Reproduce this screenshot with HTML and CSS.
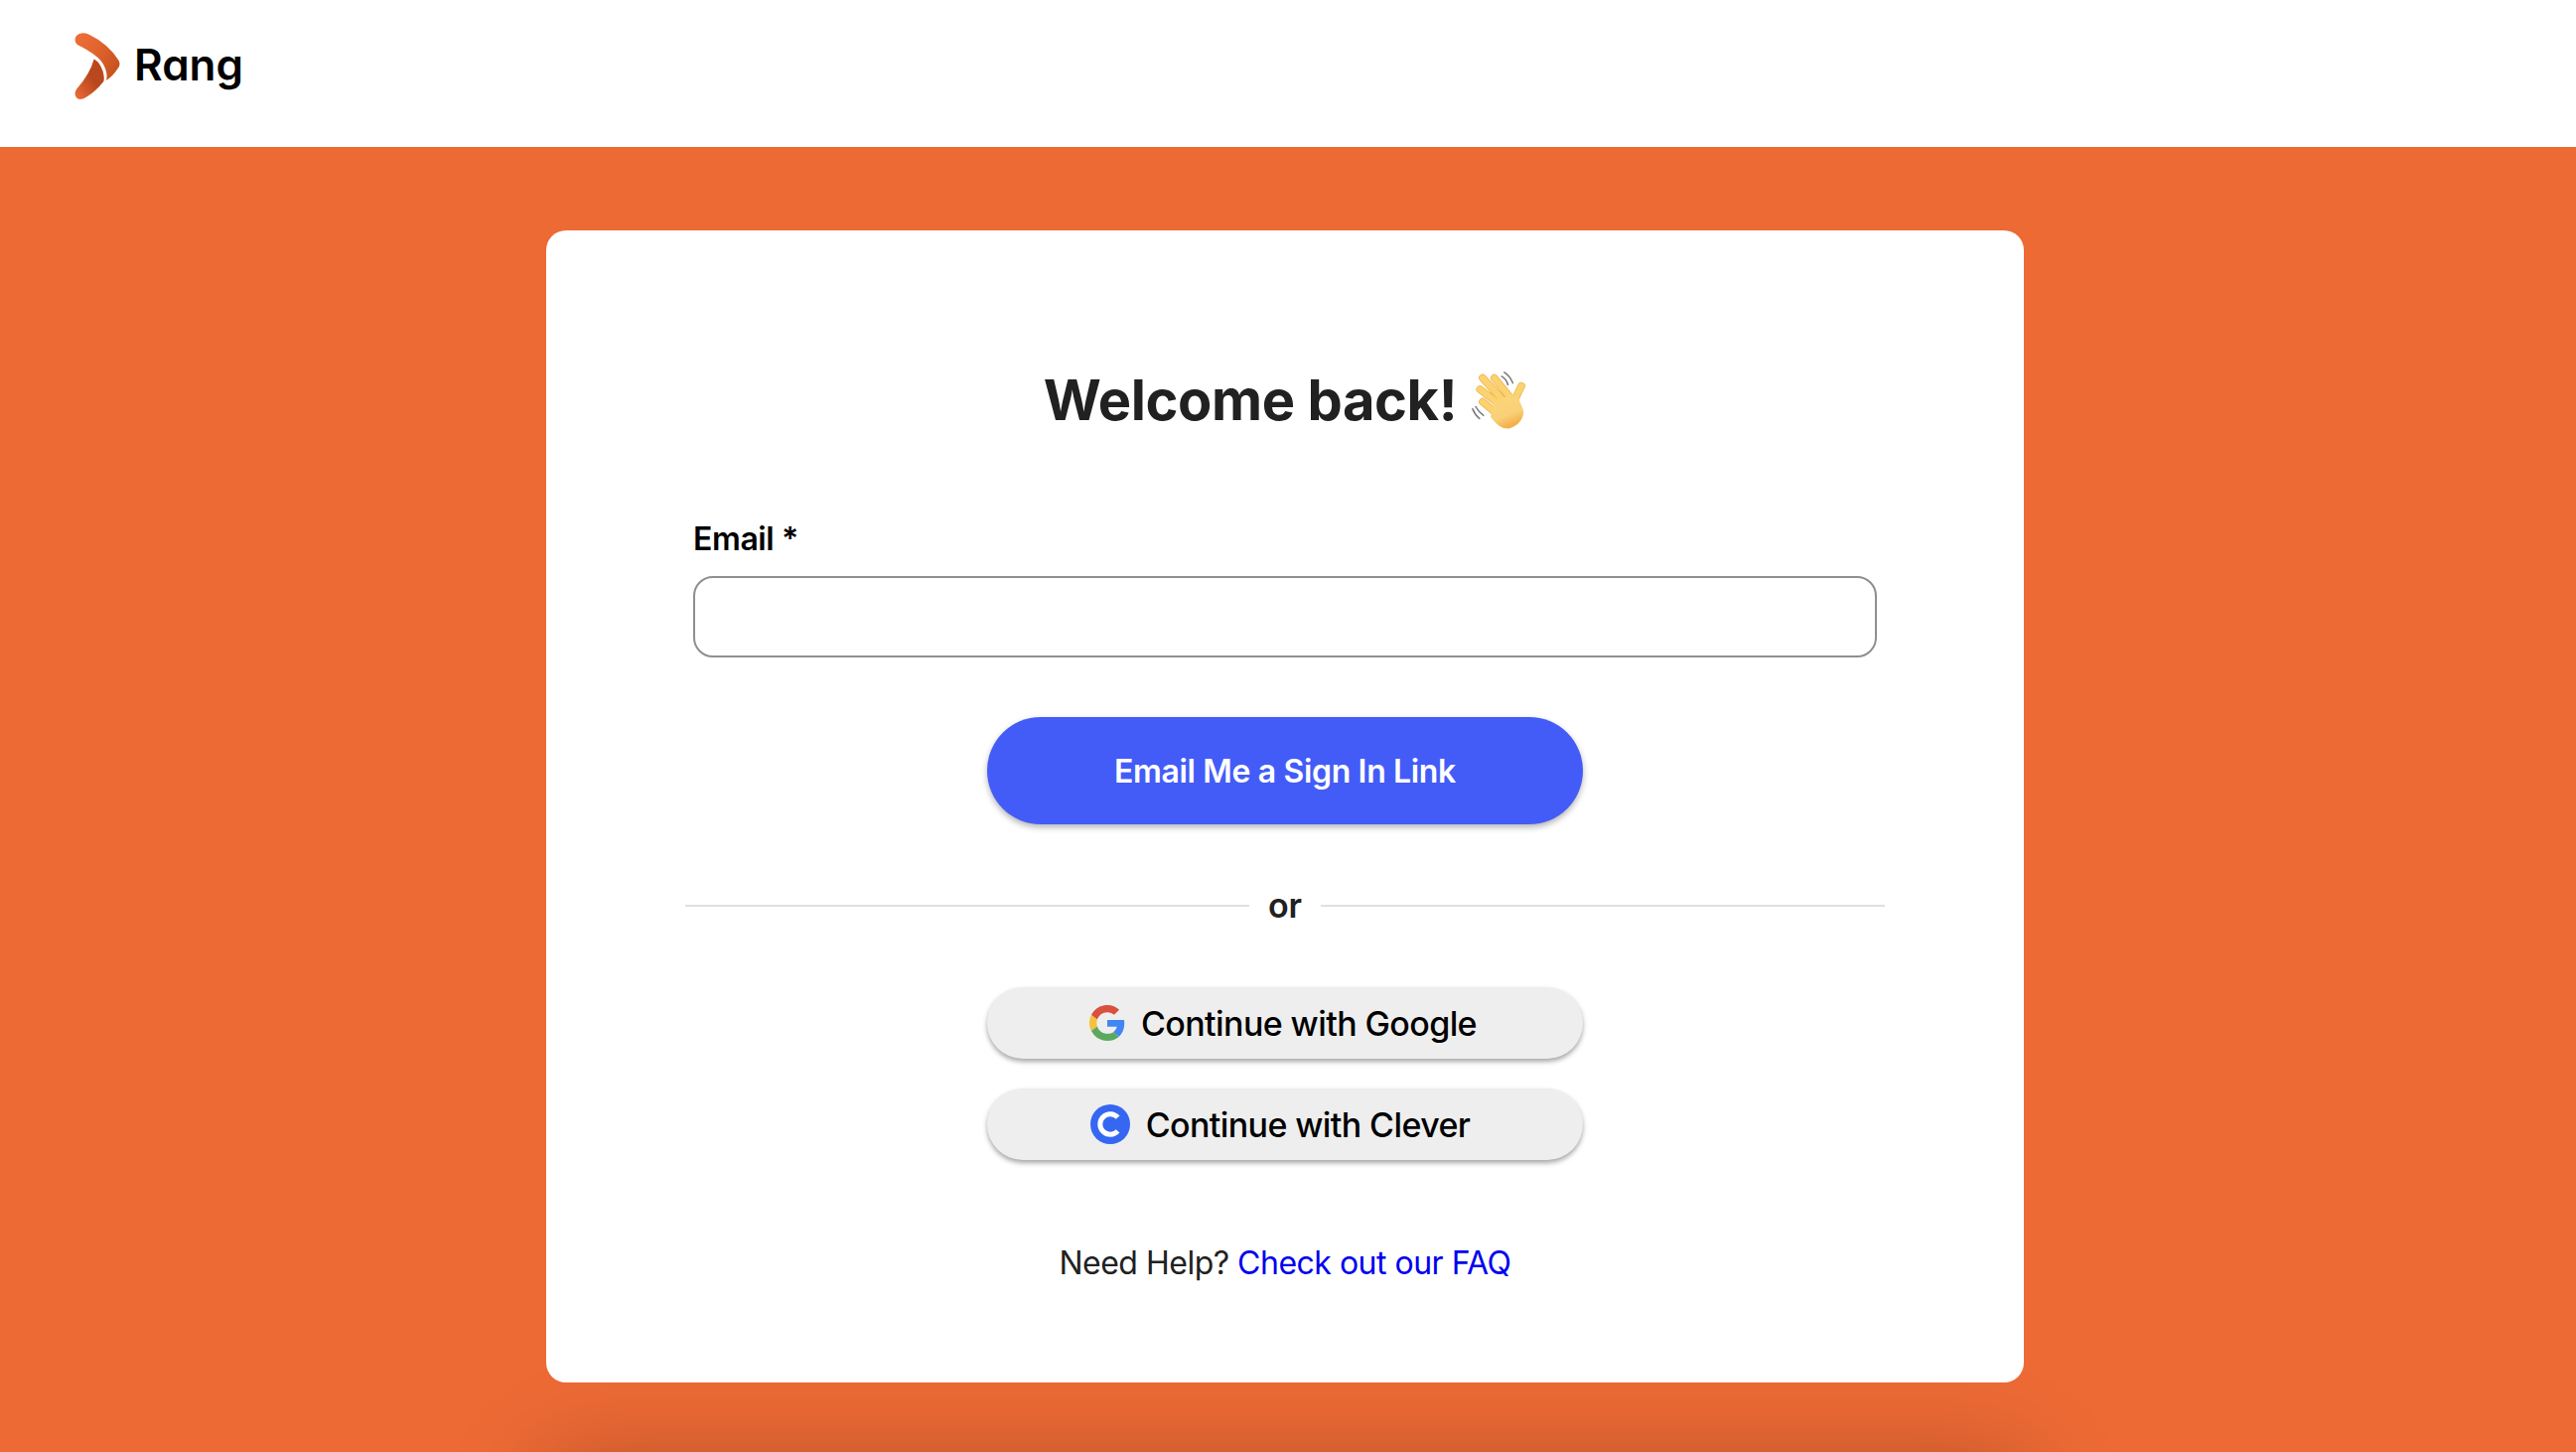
FILE: index.html
```html
<!DOCTYPE html>
<html lang="en">
<head>
<meta charset="utf-8">
<title>Rang</title>
<link rel="stylesheet" href="styles.css">
</head>
<body>
<header class="topbar">
  <svg class="logo" viewBox="100 60 150 215" aria-hidden="true">
    <defs>
      <linearGradient id="armTop" x1="0" y1="0" x2="1" y2="0.6"><stop offset="0" stop-color="#EE6F3A"/><stop offset="0.5" stop-color="#E2642F"/><stop offset="1" stop-color="#C9531F"/></linearGradient>
      <linearGradient id="armLow" x1="0" y1="1" x2="1" y2="0"><stop offset="0" stop-color="#EE6F3A"/><stop offset="0.55" stop-color="#B9481C"/><stop offset="1" stop-color="#B9481C"/></linearGradient>
    </defs>
    <path fill="url(#armTop)" d="M109 74Q122 60 148 70Q206 98 238 148Q248 162 236 176Q222 198 201 212Q207 190 192 162Q176 134 112 102Q99 88 109 74Z"/>
    <path fill="url(#armLow)" d="M163 146Q176 152 184 168Q198 192 193 215Q168 246 142 262Q126 274 112 268Q98 256 110 238Q152 190 163 146Z"/>
  </svg>
  <span class="brand">Rang</span>
</header>
<main class="stage">
  <section class="card">
    <h1 class="title">Welcome back!
      <svg class="wave" viewBox="35 25 165 180" aria-hidden="true">
        <defs>
          <linearGradient id="palm" x1="0" y1="0" x2="0.4" y2="1"><stop offset="0" stop-color="#FBD677"/><stop offset="0.7" stop-color="#FAD078"/><stop offset="1" stop-color="#F2B04A"/></linearGradient>
        </defs>
        <g fill="none" stroke-linecap="round">
          <path stroke="#E9AE4E" stroke-width="23" d="M68 48L125 110M103 48L150 105M60 82L115 125M68 120L110 155M185 72L165 115"/>
          <path stroke="#FBD26E" stroke-width="19" d="M68 48L125 110M103 48L150 105M60 82L115 125M68 120L110 155M185 72L165 115"/>
        </g>
        <path fill="url(#palm)" d="M100 125L150 98L172 100Q186 130 192 150Q190 185 150 200Q120 205 92 165Z"/>
        <path fill="none" stroke="#777" stroke-width="4.5" d="M124 42Q140 50 145 70M132 30Q150 40 160 65M37 140Q45 160 60 172M46 133Q55 150 72 162"/>
      </svg>
    </h1>
    <div class="field">
      <label class="field-label" for="email">Email *</label>
      <input class="field-input" id="email" type="email">
    </div>
    <button class="btn btn-primary" type="button">Email Me a Sign In Link</button>
    <div class="divider"><span class="divider-text">or</span></div>
    <div class="sso">
      <button class="btn btn-sso" type="button">
        <svg class="icon-google" viewBox="0 0 48 48" aria-hidden="true">
          <path fill="#D9503F" d="M24 9.5c3.54 0 6.71 1.22 9.21 3.6l6.85-6.85C35.9 2.38 30.47 0 24 0 14.62 0 6.51 5.38 2.56 13.22l7.98 6.19C12.43 13.72 17.74 9.5 24 9.5z"/>
          <path fill="#4285F4" d="M46.98 24.55c0-1.57-.15-3.09-.38-4.55H24v9.02h12.94c-.58 2.96-2.26 5.48-4.78 7.18l7.73 6c4.51-4.18 7.09-10.36 7.09-17.65z"/>
          <path fill="#F4C23D" d="M10.53 28.59c-.48-1.45-.76-2.99-.76-4.59s.27-3.14.76-4.59l-7.98-6.19C.92 16.46 0 20.12 0 24c0 3.88.92 7.54 2.56 10.78l7.97-6.19z"/>
          <path fill="#5BA85F" d="M24 48c6.48 0 11.93-2.13 15.89-5.81l-7.73-6c-2.15 1.45-4.92 2.3-8.16 2.3-6.26 0-11.57-4.22-13.47-9.91l-7.98 6.19C6.51 42.62 14.62 48 24 48z"/>
        </svg>
        <span>Continue with Google</span>
      </button>
      <button class="btn btn-sso btn-clever" type="button">
        <svg class="icon-clever" viewBox="0 0 40 40" aria-hidden="true">
          <circle cx="20" cy="20" r="20" fill="#3667F2"/>
          <path fill="none" stroke="#fff" stroke-width="5" d="M27.6 13.2a10.2 10.2 0 1 0 0 13.6"/>
        </svg>
        <span>Continue with Clever</span>
      </button>
    </div>
    <p class="help">Need Help? <a class="help-link" href="#">Check out our FAQ</a></p>
  </section>
</main>
</body>
</html>
```
FILE: styles.css
```css
* { box-sizing: border-box; }
html, body { margin: 0; height: 100%; }
body {
  background: #ED6A35;
  font-family: Inter, "Noto Sans", sans-serif;
  color: #000;
  overflow: hidden;
  display: flex;
  flex-direction: column;
}
.topbar {
  height: 148px;
  flex: none;
  background: #fff;
  display: flex;
  align-items: center;
  gap: 12px;
  padding-left: 74px;
  padding-bottom: 16px;
}
.logo { width: 49px; height: 71px; display: block; }
.brand {
  font-weight: 600;
  font-size: 44px;
  line-height: 1;
  color: #000;
  padding-bottom: 3px;
  font-feature-settings: "cv11" 1;
}
.stage { flex: 1; display: flex; justify-content: center; padding: 84px 6px 0 0; }
.card {
  width: 1488px;
  height: 1160px;
  background: #fff;
  border-radius: 20px;
  display: flex;
  flex-direction: column;
  align-items: center;
  padding: 134px 140px 0;
  box-shadow: 0 1243px 100px rgba(0, 0, 0, 0.25);
}
.title {
  margin: 0;
  font-size: 56px;
  font-weight: 700;
  letter-spacing: -0.4px;
  line-height: 74px;
  color: #212121;
  height: 74px;
  display: flex;
  align-items: center;
  gap: 15px;
}
.wave { width: 55px; height: 60px; display: block; }
.field { width: 100%; margin-top: 83px; padding: 0 8px; }
.field-label { display: block; font-size: 32px; font-weight: 600; letter-spacing: -0.4px; line-height: 40px; margin-bottom: 17px; }
.field-input {
  display: block;
  width: 100%;
  height: 82px;
  border: 2px solid #8f8f8f;
  border-radius: 20px;
  background: #fff;
}
.btn {
  border: 0;
  font-family: inherit;
  display: flex;
  align-items: center;
  justify-content: center;
  width: 600px;
  border-radius: 54px;
}
.btn-primary {
  height: 108px;
  margin-top: 60px;
  background: #435CF7;
  color: #fff;
  font-size: 32px;
  font-weight: 600;
  letter-spacing: -0.35px;
  box-shadow: 0 3px 6px rgba(0, 0, 0, 0.3);
}
.divider {
  width: 100%;
  margin-top: 64px;
  height: 36px;
  display: flex;
  align-items: center;
  gap: 19px;
}
.divider::before, .divider::after { content: ""; flex: 1; height: 2px; background: #e0e0e0; }
.divider-text { font-size: 34px; font-weight: 600; color: #212121; line-height: 36px; }
.sso { margin-top: 64px; display: flex; flex-direction: column; gap: 30px; }
.btn-sso {
  height: 72px;
  background: #EEEEEE;
  color: #000;
  font-size: 34px;
  font-weight: 550;
  letter-spacing: -0.6px;
  gap: 16px;
  padding-right: 10px;
  box-shadow: 0 3px 5px rgba(0, 0, 0, 0.35);
}
.btn-clever { padding-right: 16px; }
.icon-google { width: 36px; height: 36px; display: block; }
.icon-clever { width: 40px; height: 40px; display: block; }
.help { margin: 85px 0 0; font-size: 32px; letter-spacing: -0.5px; line-height: 38px; color: #212121; }
.help-link { color: #0000EE; text-decoration: none; }
```
